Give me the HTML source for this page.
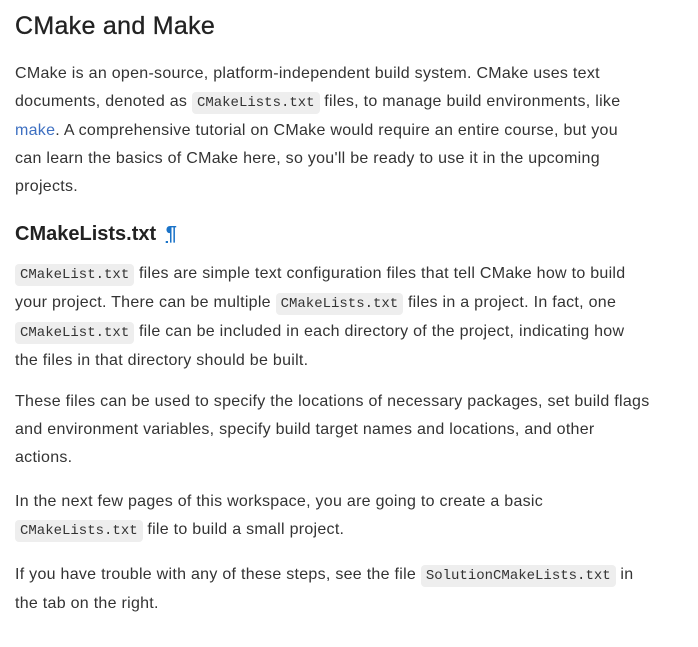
<!DOCTYPE html>
<html><head><meta charset="utf-8"><style>
body{margin:0;background:#fff;width:698px;height:647px;overflow:hidden;font-family:"Liberation Sans",sans-serif;color:#333;}
.p{position:absolute;left:15px;font-size:16px;letter-spacing:0.28px;line-height:28px;white-space:nowrap;}
code{font-family:"Liberation Mono",monospace;font-size:14px;letter-spacing:0;background:#eee;border-radius:4px;padding:3px 5px;color:#333;}
a{color:#3d6fc1;text-decoration:none}
h1{position:absolute;left:15px;top:9px;margin:0;font-size:25px;font-weight:normal;color:#222;line-height:34px;letter-spacing:0.3px;-webkit-text-stroke:0.3px #222}
h2{position:absolute;left:15px;top:220px;margin:0;font-size:20px;font-weight:bold;color:#222;line-height:28px}
h2 a{color:#1a73c8;text-decoration:underline;margin-left:4px}
</style></head><body>
<h1>CMake and Make</h1>
<div class="p" style="top:60px">CMake is an open-source, platform-independent build system. CMake uses text<br>documents, denoted as <code>CMakeLists.txt</code> files, to manage build environments, like<br><a>make</a>. A comprehensive tutorial on CMake would require an entire course, but you<br>can learn the basics of CMake here, so you'll be ready to use it in the upcoming<br>projects.</div>
<h2>CMakeLists.txt <a>¶</a></h2>
<div class="p" style="top:260px"><code>CMakeList.txt</code> files are simple text configuration files that tell CMake how to build<br>your project. There can be multiple <code>CMakeLists.txt</code> files in a project. In fact, one<br><code>CMakeList.txt</code> file can be included in each directory of the project, indicating how<br>the files in that directory should be built.</div>
<div class="p" style="top:388px">These files can be used to specify the locations of necessary packages, set build flags<br>and environment variables, specify build target names and locations, and other<br>actions.</div>
<div class="p" style="top:488px">In the next few pages of this workspace, you are going to create a basic<br><code>CMakeLists.txt</code> file to build a small project.</div>
<div class="p" style="top:561px">If you have trouble with any of these steps, see the file <code>SolutionCMakeLists.txt</code> in<br>the tab on the right.</div>
</body></html>
